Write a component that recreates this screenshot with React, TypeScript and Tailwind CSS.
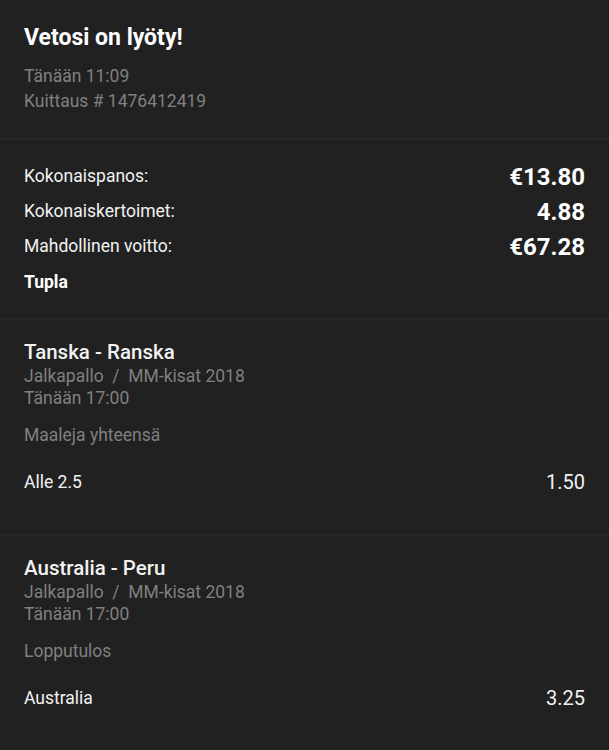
import React from 'react';

interface Selection {
  event: string;
  sport: string;
  league: string;
  time: string;
  market: string;
  pick: string;
  odds: string;
}

const selections: Selection[] = [
  {
    event: 'Tanska - Ranska',
    sport: 'Jalkapallo',
    league: 'MM-kisat 2018',
    time: 'Tänään 17:00',
    market: 'Maaleja yhteensä',
    pick: 'Alle 2.5',
    odds: '1.50',
  },
  {
    event: 'Australia - Peru',
    sport: 'Jalkapallo',
    league: 'MM-kisat 2018',
    time: 'Tänään 17:00',
    market: 'Lopputulos',
    pick: 'Australia',
    odds: '3.25',
  },
];

const totals = [
  { label: 'Kokonaispanos:', value: '€13.80' },
  { label: 'Kokonaiskertoimet:', value: '4.88' },
  { label: 'Mahdollinen voitto:', value: '€67.28' },
];

const SelectionBlock: React.FC<{ selection: Selection; last?: boolean }> = ({ selection, last }) => (
  <section className={`px-6 pt-[20px] ${last ? 'pb-10' : 'pb-[38px] border-b-2 border-[#282828]'}`}>
    <h2 className="text-[20.5px] leading-[24px] font-medium text-[#f2f2f2]">{selection.event}</h2>
    <p className="mt-[1px] text-[17.5px] leading-[22px] text-[#808080]">
      {selection.sport}&nbsp; /&nbsp; {selection.league}
    </p>
    <p className="text-[17.5px] leading-[22px] text-[#808080]">{selection.time}</p>
    <p className="mt-[15px] text-[17.5px] leading-[23px] text-[#808080]">{selection.market}</p>
    <div className="mt-[21px] flex items-center justify-between h-[28px]">
      <span className="text-[17.5px] text-[#f2f2f2]">{selection.pick}</span>
      <span className="text-[20px] text-[#f2f2f2]">{selection.odds}</span>
    </div>
  </section>
);

export default function App() {
  return (
    <div className="min-h-[750px] w-full bg-[#212121] font-['Roboto',sans-serif] antialiased">
      <section className="px-6 pt-[24px] pb-[24px] border-b-2 border-[#282828]">
        <h1 className="text-[23px] leading-[28px] font-bold text-white">Vetosi on lyöty!</h1>
        <div className="mt-[12px] text-[17.5px] leading-[25px] text-[#808080]">
          <p>Tänään 11:09</p>
          <p>Kuittaus # 1476412419</p>
        </div>
      </section>

      <section className="px-6 pt-[19px] pb-[18px] border-b-2 border-[#282828]">
        {totals.map((row) => (
          <div key={row.label} className="flex items-center justify-between h-[35px]">
            <span className="text-[17.5px] text-[#f2f2f2]">{row.label}</span>
            <span className="text-[24px] font-bold text-white">{row.value}</span>
          </div>
        ))}
        <div className="mt-[1px] flex items-center h-[35px]">
          <span className="text-[17.5px] font-bold text-white">Tupla</span>
        </div>
      </section>

      {selections.map((s, i) => (
        <SelectionBlock key={s.event} selection={s} last={i === selections.length - 1} />
      ))}
    </div>
  );
}
